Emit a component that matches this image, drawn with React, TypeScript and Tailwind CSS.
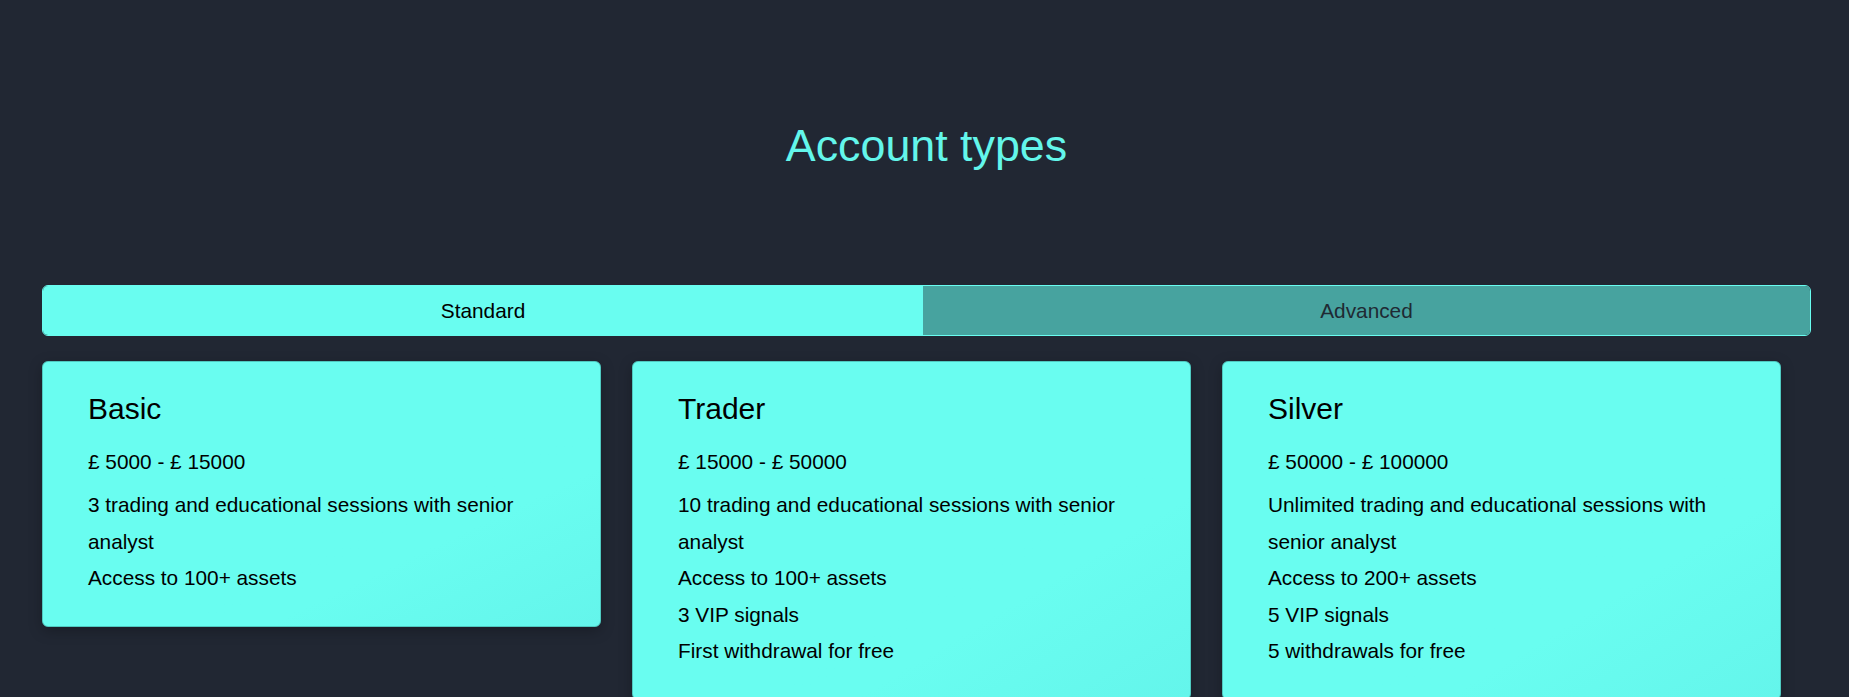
const plans = [
  {
    name: "Basic",
    range: "£ 5000 - £ 15000",
    features: ["3 trading and educational sessions with senior analyst", "Access to 100+ assets"],
  },
  {
    name: "Trader",
    range: "£ 15000 - £ 50000",
    features: [
      "10 trading and educational sessions with senior analyst",
      "Access to 100+ assets",
      "3 VIP signals",
      "First withdrawal for free",
    ],
  },
  {
    name: "Silver",
    range: "£ 50000 - £ 100000",
    features: [
      "Unlimited trading and educational sessions with senior analyst",
      "Access to 200+ assets",
      "5 VIP signals",
      "5 withdrawals for free",
    ],
  },
];

function PlanCard({ plan }: { plan: (typeof plans)[number] }) {
  return (
    <div className="rounded-[6px] border border-[#4fc9c0] bg-linear-to-br from-[#69fdf0] from-70% to-[#64f5eb] pl-[45px] pr-[46px] pt-[29px] pb-[29px] text-black shadow-[0_4px_14px_rgba(0,0,0,0.25)]">
      <h3 className="mb-[17px] text-[30px] leading-[36px]">{plan.name}</h3>
      <p className="mb-[7px] text-[20.8px] leading-[36px]">{plan.range}</p>
      <ul>
        {plan.features.map((f) => (
          <li key={f} className="text-[20.8px] leading-[36.5px]">
            {f}
          </li>
        ))}
      </ul>
    </div>
  );
}

export default function App() {
  return (
    <div
      className="min-h-screen bg-[#212733] pl-[42px] pr-[38px] pt-[118px]"
      style={{ fontFamily: '"Liberation Sans", Arial, sans-serif' }}
    >
      <h1 className="text-center text-[44.8px] leading-[54px] text-[#63f6eb]">Account types</h1>

      {/* Tabs */}
      <div className="mt-[113px] flex h-[51px] overflow-hidden rounded-[6px] border border-[#69fdf0]">
        <button className="w-[880px] shrink-0 bg-[#69fdf0] text-[20.8px] text-black">Standard</button>
        <button className="flex-1 bg-[#47a39f] text-[20.8px] text-[#1f2a33]">Advanced</button>
      </div>

      <div className="mt-[25px] grid grid-cols-3 items-start gap-[31px] pr-[30px]">
        {plans.map((p) => (
          <PlanCard key={p.name} plan={p} />
        ))}
      </div>
    </div>
  );
}
